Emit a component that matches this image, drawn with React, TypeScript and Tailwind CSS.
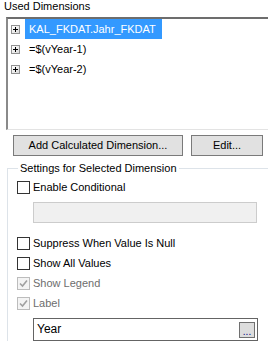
import React from "react";

function PlusBox() {
  return (
    <span className="w-[9px] h-[9px] border border-[#919191] bg-gradient-to-br from-white to-[#dcdcdc] flex items-center justify-center shrink-0">
      <svg width="7" height="7" viewBox="0 0 7 7">
        <path d="M1 3.5h5M3.5 1v5" stroke="#000" strokeWidth="1" shapeRendering="crispEdges" />
      </svg>
    </span>
  );
}

function Check({ label, checked, disabled }: { label: string; checked?: boolean; disabled?: boolean }) {
  return (
    <div className="flex items-center h-[13px]">
      <span
        className={
          disabled
            ? "w-[13px] h-[13px] border border-[#bcbcbc] bg-[#f4f4f4] flex items-center justify-center"
            : "w-[13px] h-[13px] border border-[#333333] bg-white flex items-center justify-center"
        }
      >
        {checked && (
          <svg width="9" height="9" viewBox="0 0 9 9">
            <path d="M1 4.5l2.5 2.5L8 1.5" fill="none" stroke={disabled ? "#a0a0a0" : "#000"} strokeWidth="1.6" />
          </svg>
        )}
      </span>
      <span className={disabled ? "ml-[3px] text-[#6d6d6d]" : "ml-[3px] text-black"}>{label}</span>
    </div>
  );
}

function Row({ text, selected }: { text: string; selected?: boolean }) {
  return (
    <div className="flex items-center h-[20px]">
      <div className="w-[17px] pl-[3px] flex items-center">
        <PlusBox />
      </div>
      <div className={selected ? "h-[20px] w-[137px] bg-[#3399ff] text-white pl-[4px] flex items-center" : "pl-[4px] flex items-center text-black"}>
        {text}
      </div>
    </div>
  );
}

export default function App() {
  return (
    <div
      className="w-[268px] h-[342px] bg-white overflow-hidden text-[11px] leading-[13px] text-black"
      style={{ fontFamily: '"Liberation Sans", Arial, sans-serif' }}
    >
      <div className="h-[17px] pl-[4px] leading-[12px]">Used Dimensions</div>

      <div className="ml-[6px] w-[272px] h-[113px] border-t-2 border-l-2 border-t-[#6d6d6d] border-l-[#8a8a8a] border-b border-b-[#e3e3e3]">
        <Row text="KAL_FKDAT.Jahr_FKDAT" selected />
        <Row text="=$(vYear-1)" />
        <Row text="=$(vYear-2)" />
      </div>

      <div className="flex mt-[5px] ml-[13px] gap-[8px]">
        <button className="w-[170px] h-[21px] bg-[#e1e1e1] border border-[#7a7a7a] flex items-center justify-center">
          Add Calculated Dimension...
        </button>
        <button className="w-[72px] h-[21px] bg-[#e1e1e1] border border-[#7a7a7a] flex items-center justify-center">
          Edit...
        </button>
      </div>

      <div className="mt-[12px] ml-[7px] w-[261px] h-[173px] border-l border-[#dde3e9] flex flex-col">
        <div className="flex items-center h-[1px]">
          <div className="w-[10px] border-t border-[#dde3e9]" />
          <span className="px-[2px] leading-[13px]">Settings for Selected Dimension</span>
          <div className="flex-1 border-t border-[#dde3e9]" />
        </div>
        <div className="ml-[9px] mt-[12px]">
          <Check label="Enable Conditional" />
        </div>
        <div className="ml-[25px] mt-[8px] w-[224px] h-[21px] bg-[#f0f0f0] border border-[#cccccc]" />
        <div className="ml-[9px] mt-[14px] flex flex-col gap-[7px]">
          <Check label="Suppress When Value Is Null" />
          <Check label="Show All Values" />
          <Check label="Show Legend" checked disabled />
          <Check label="Label" checked disabled />
        </div>
        <div className="ml-[25px] mt-[8px] w-[225px] h-[23px] border border-[#646464] bg-white flex items-center justify-between pl-[3px] pr-[2px]">
          <span className="text-[12px]">Year</span>
          <span className="w-[16px] h-[16px] bg-[#dddddd] border border-[#707070] flex items-end justify-center text-[#000080] leading-[10px] text-[10px]">...</span>
        </div>
      </div>
    </div>
  );
}
